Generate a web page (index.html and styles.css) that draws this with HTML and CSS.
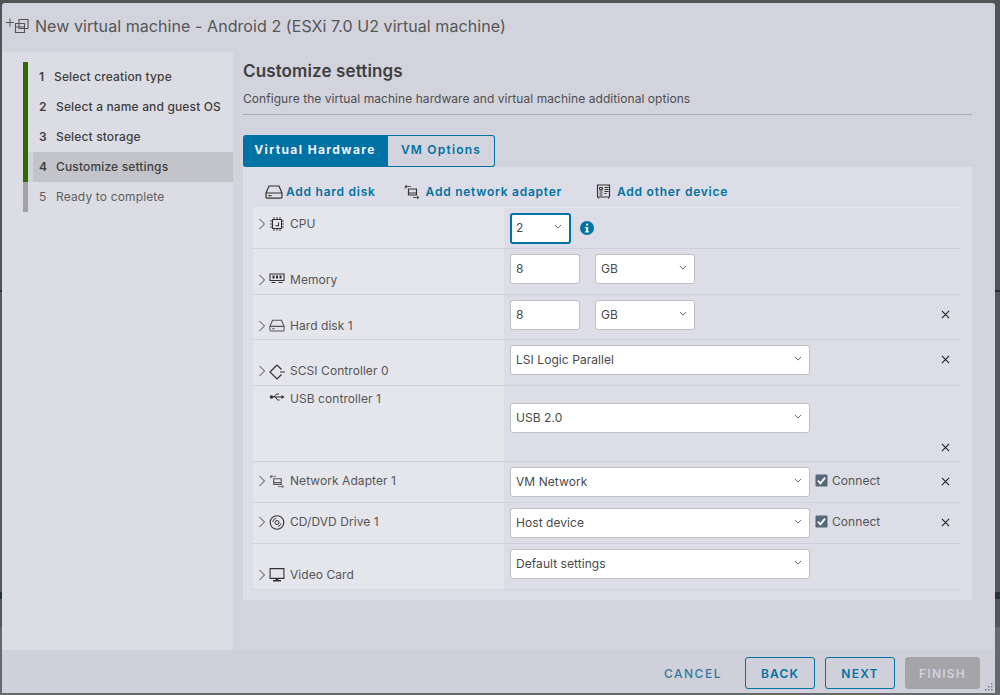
FILE: index.html
```html
<!DOCTYPE html>
<html lang="en">
<head>
  <meta charset="UTF-8" />
  <title>New virtual machine</title>
  <link rel="stylesheet" href="styles.css">
</head>
<body>

<svg class="defs" width="0" height="0">
  <symbol id="i-disk" viewBox="0 0 18 14">
    <path d="M4 1h10l3 7v4a1.2 1.2 0 0 1-1.2 1.2H2.2A1.2 1.2 0 0 1 1 12V8z M1 8h16 M3.5 10.6h3" fill="none" stroke="currentColor" stroke-width="1.2"/>
  </symbol>
  <symbol id="i-net" viewBox="0 0 16 16">
    <path d="M4.5 5h8v6h-8z M4.5 9h8" fill="none" stroke="currentColor" stroke-width="1.2"/>
    <path d="M1 2.5h6 M1 2.5l2-1.5 M1 2.5l2 1.5 M9 13.5h6 M15 13.5l-2-1.5 M15 13.5l-2 1.5 M1 2.5v2" fill="none" stroke="currentColor" stroke-width=".8"/>
  </symbol>
  <symbol id="i-x" viewBox="0 0 10 10">
    <path d="M1 1l8 8 M9 1l-8 8" fill="none" stroke="currentColor" stroke-width="1.2"/>
  </symbol>
  <symbol id="i-arrow" viewBox="0 0 8 12">
    <path d="M1.5 1l5 5-5 5" fill="none" stroke="currentColor" stroke-width="1"/>
  </symbol>
  <symbol id="i-chev" viewBox="0 0 10 6">
    <path d="M1 1l4 4 4-4" fill="none" stroke="currentColor" stroke-width="1"/>
  </symbol>
  <symbol id="i-check" viewBox="0 0 14 14">
    <rect width="13" height="13" x=".5" y=".5" rx="1.5" fill="#56697a"/>
    <path d="M3.2 7.2l2.6 2.8 5-6" fill="none" stroke="#fff" stroke-width="2"/>
  </symbol>
</svg>

<div class="modal">
  <header class="modal-head">
    <svg class="head-icon" viewBox="0 0 28 20" width="28" height="20">
      <path d="M0 6.5h8 M4 2.5v8" fill="none" stroke="#555" stroke-width="1"/>
      <path d="M13 3.5h9v9h-9z M9.5 7.5h9v9h-9z M9.5 11h9 M13 7.5v-4" fill="none" stroke="#555" stroke-width="1.1"/>
    </svg>
    <h1>New virtual machine - Android 2 (ESXi 7.0 U2 virtual machine)</h1>
  </header>

  <div class="modal-body">
    <aside class="sidebar">
      <ol class="steps">
        <li class="step done"><div class="step-in"><b>1</b><span>Select creation type</span></div></li>
        <li class="step done"><div class="step-in"><b class="wide">2</b><span>Select a name and guest OS</span></div></li>
        <li class="step done"><div class="step-in"><b class="wide">3</b><span>Select storage</span></div></li>
        <li class="step done current"><div class="step-in"><b class="wide">4</b><span>Customize settings</span></div></li>
        <li class="step todo"><div class="step-in"><b class="wide">5</b><span>Ready to complete</span></div></li>
      </ol>
    </aside>

    <main class="content">
      <h2>Customize settings</h2>
      <p class="sub">Configure the virtual machine hardware and virtual machine additional options</p>

      <div class="tabs">
        <div class="tab active">Virtual Hardware</div>
        <div class="tab">VM Options</div>
      </div>

      <div class="panel">
        <div class="toolbar">
          <a class="tool t1"><svg width="18" height="14"><use href="#i-disk"/></svg>Add hard disk</a>
          <a class="tool t2"><svg width="16" height="16"><use href="#i-net"/></svg>Add network adapter</a>
          <a class="tool t3">
            <svg width="15" height="15" viewBox="0 0 15 15"><path d="M1.5 1h12v12h-12z" fill="none" stroke="#333" stroke-width="1.2"/><path d="M3.5 3.5h3v2h-3z M3.5 7h3 M3.5 9h3 M3.5 11h3 M8.5 3.5h4 M8.5 5.5h4 M8.5 7.5h4 M8.5 9.5h2 M2.5 13.5v1.2 M12.5 13.5v1.2" fill="none" stroke="#333" stroke-width="1"/></svg>
            Add other device
          </a>
        </div>

        <div class="hw-table">
          <div class="row r-cpu">
            <div class="name">
              <svg class="arrow" width="8" height="12"><use href="#i-arrow"/></svg>
              <svg class="dev" width="14" height="14" viewBox="0 0 14 14"><path d="M2.5 2.5h9v9h-9z M8.5 5.5v3.2h-3" fill="none" stroke="#333" stroke-width="1.1"/><path d="M4 0v2 M7 0v2 M10 0v2 M4 12v2 M7 12v2 M10 12v2 M0 4h2 M0 7h2 M0 10h2 M12 4h2 M12 7h2 M12 10h2" fill="none" stroke="#333" stroke-width=".9"/></svg>
              <span>CPU</span>
            </div>
            <div class="fields">
              <div class="sel sel-cpu">2<svg width="8" height="5"><use href="#i-chev"/></svg></div>
              <svg class="info" width="14" height="14" viewBox="0 0 14 14"><circle cx="7" cy="7" r="7" fill="#0072a3"/><rect x="6" y="2.5" width="2.2" height="2.2" rx="1" fill="#e8eef2"/><path d="M5 6h3.2v4.2h1V11.4H5v-1.2h1V7.2H5z" fill="#e8eef2"/></svg>
            </div>
          </div>

          <div class="row r-mem">
            <div class="name">
              <svg class="arrow" width="8" height="12"><use href="#i-arrow"/></svg>
              <svg class="dev" width="15" height="10" viewBox="0 0 15 10"><path d="M.5 1h14v6.5h-14z" fill="none" stroke="#333" stroke-width="1.1"/><path d="M3 2.5h2v3H3z M6.5 2.5h2v3h-2z M10 2.5h2v3h-2z" fill="#333"/><path d="M2 9.5h4 M9 9.5h4" stroke="#333" stroke-width="1"/></svg>
              <span>Memory</span>
            </div>
            <div class="fields">
              <div class="inp">8</div>
              <div class="sel sel-unit">GB<svg width="8" height="5"><use href="#i-chev"/></svg></div>
            </div>
          </div>

          <div class="row r-disk">
            <div class="name">
              <svg class="arrow" width="8" height="12"><use href="#i-arrow"/></svg>
              <svg class="dev" width="17" height="13"><use href="#i-disk"/></svg>
              <span>Hard disk 1</span>
            </div>
            <div class="fields">
              <div class="inp">8</div>
              <div class="sel sel-unit">GB<svg width="8" height="5"><use href="#i-chev"/></svg></div>
              <svg class="del" width="9" height="9"><use href="#i-x"/></svg>
            </div>
          </div>

          <div class="row r-scsi">
            <div class="name">
              <svg class="arrow" width="8" height="12"><use href="#i-arrow"/></svg>
              <svg class="dev" width="16" height="16" viewBox="0 0 16 16"><path d="M8 1L1 8l7 7 4.5-4.5 M12.5 5.5L8 1 M11 8h5" fill="none" stroke="#333" stroke-width="1.2"/></svg>
              <span>SCSI Controller 0</span>
            </div>
            <div class="fields">
              <div class="sel sel-wide">LSI Logic Parallel<svg width="8" height="5"><use href="#i-chev"/></svg></div>
              <svg class="del" width="9" height="9"><use href="#i-x"/></svg>
            </div>
          </div>

          <div class="row r-usb">
            <div class="name no-arrow">
              <svg class="dev" width="15" height="10" viewBox="0 0 15 10"><path d="M1 5h13" stroke="#333" stroke-width="1.1"/><circle cx="2" cy="5" r="1.8" fill="#333"/><path d="M15 5l-3-2v4z" fill="#333"/><path d="M4.5 5l2.5-3h2.5 M6 5l2 3h2" fill="none" stroke="#333" stroke-width="1"/></svg>
              <span>USB controller 1</span>
            </div>
            <div class="fields fields-usb">
              <div class="sel sel-wide">USB 2.0<svg width="8" height="5"><use href="#i-chev"/></svg></div>
              <svg class="del" width="9" height="9"><use href="#i-x"/></svg>
            </div>
          </div>

          <div class="row r-net">
            <div class="name">
              <svg class="arrow" width="8" height="12"><use href="#i-arrow"/></svg>
              <svg class="dev" width="15" height="15"><use href="#i-net"/></svg>
              <span>Network Adapter 1</span>
            </div>
            <div class="fields">
              <div class="sel sel-wide">VM Network<svg width="8" height="5"><use href="#i-chev"/></svg></div>
              <label class="conn"><svg width="13" height="13"><use href="#i-check"/></svg>Connect</label>
              <svg class="del" width="9" height="9"><use href="#i-x"/></svg>
            </div>
          </div>

          <div class="row r-cd">
            <div class="name">
              <svg class="arrow" width="8" height="12"><use href="#i-arrow"/></svg>
              <svg class="dev" width="15" height="15" viewBox="0 0 15 15"><circle cx="7.5" cy="7.5" r="6.8" fill="none" stroke="#333" stroke-width="1.1"/><circle cx="7.5" cy="7.5" r="2" fill="none" stroke="#333" stroke-width="1"/><path d="M3.2 7a4.4 4.4 0 0 1 3.5-3.8 M11.5 8.5a4.4 4.4 0 0 1-3 3" fill="none" stroke="#333" stroke-width=".9"/></svg>
              <span>CD/DVD Drive 1</span>
            </div>
            <div class="fields">
              <div class="sel sel-wide">Host device<svg width="8" height="5"><use href="#i-chev"/></svg></div>
              <label class="conn"><svg width="13" height="13"><use href="#i-check"/></svg>Connect</label>
              <svg class="del" width="9" height="9"><use href="#i-x"/></svg>
            </div>
          </div>

          <div class="row r-video">
            <div class="name">
              <svg class="arrow" width="8" height="12"><use href="#i-arrow"/></svg>
              <svg class="dev" width="15" height="14" viewBox="0 0 15 14"><path d="M.6.6h13.8v9.8H.6z" fill="none" stroke="#333" stroke-width="1.1"/><path d="M6 10.5h3v1.5H6z M3.5 12h8v1.5h-8z" fill="#333"/></svg>
              <span>Video Card</span>
            </div>
            <div class="fields">
              <div class="sel sel-wide">Default settings<svg width="8" height="5"><use href="#i-chev"/></svg></div>
            </div>
          </div>
        </div>
      </div>
    </main>
  </div>

  <footer class="modal-foot">
    <button class="btn link">CANCEL</button>
    <button class="btn outline">BACK</button>
    <button class="btn outline">NEXT</button>
    <button class="btn disabled">FINISH</button>
    <svg class="grip" width="8" height="8" viewBox="0 0 8 8"><path d="M6 0h1.5v1.5H6z M3 3h1.5v1.5H3z M6 3h1.5v1.5H6z M0 6h1.5v1.5H0z M3 6h1.5v1.5H3z M6 6h1.5v1.5H6z" fill="#77787e"/></svg>
  </footer>
</div>

</body>
</html>
```

FILE: styles.css
```css
* {
  box-sizing: border-box;
}

body {
  margin: 0;
  width: 1000px;
  height: 695px;
  padding: 3px 5px 2px 2px;
  /* what shows of the page behind the dialog */
  background: linear-gradient(to bottom, #525357 0, #525357 290px, #2b2f33 290px, #2b2f33 292px, #56575b 292px, #56575b 592px, #26333d 592px, #26333d 599px, #55565a 599px, #55565a 627px, #67686c 627px);
  font-family: Inter, 'Noto Sans', sans-serif;
  font-size: 12px;
  letter-spacing: .06px;
  color: #565656;
  overflow: hidden;
}

.defs {
  display: block;
  height: 0;
}

.modal {
  height: 690px;
  display: flex;
  flex-direction: column;
  background: #d2d3dd;
  border-radius: 3px;
}

.modal-head {
  height: 49px;
  display: flex;
  align-items: center;
  gap: 1px;
  padding: 0 0 0 4px;
}

.modal-head h1 {
  margin: -3px 0 0;
  font-size: 16px;
  font-weight: 400;
  color: #565656;
  letter-spacing: .07px;
}

.head-icon {
  margin-top: -3px;
}

.modal-body {
  flex: 1;
  display: flex;
}

.sidebar {
  width: 231px;
  background: #dbdce4;
  padding: 10px 0 0 21px;
}

.steps {
  list-style: none;
  margin: 0;
  padding: 0;
}

.step {
  height: 30px;
  border-left: 5px solid #2f6b00;
  font-weight: 500;
  letter-spacing: .15px;
  color: #3f3f3f;
}

.step-in {
  height: 30px;
  display: flex;
  align-items: center;
  padding: 0 0 2px 11px;
}

.step b {
  font-weight: 600;
  width: 15px;
}

.step b.wide {
  width: 17px;
}

.step.current {
  background: #d2d3dd;
}

.step.current .step-in {
  margin-left: 5px;
  padding-left: 6px;
  background: #c3c4ca;
  border-radius: 3px 0 0 3px;
}

.step.todo {
  border-left-color: #a3a3a7;
  font-weight: 400;
  color: #5f5f5f;
}

.step.todo b {
  font-weight: 400;
}

.content {
  flex: 1;
  padding: 9px 23px 0 10px;
}

.content h2 {
  margin: 0;
  font-size: 17px;
  line-height: 21px;
  font-weight: 600;
  letter-spacing: .12px;
  color: #3f3f3f;
}

.sub {
  margin: 9px 0 0;
  padding-bottom: 7px;
  line-height: 16px;
  border-bottom: 1px solid #a9aab3;
  color: #4f4f4f;
}

.tabs {
  display: flex;
  margin-top: 20px;
  height: 32px;
}

.tab {
  display: flex;
  align-items: center;
  justify-content: center;
  width: 107px;
  padding-bottom: 3px;
  font-weight: 600;
  letter-spacing: 1.2px;
  color: #0072a3;
  border: 1px solid #0072a3;
  border-left: 0;
  border-radius: 0 3px 3px 0;
}

.tab.active {
  width: 145px;
  background: #0072a3;
  color: #f2f3f5;
  font-weight: 700;
  letter-spacing: 1.4px;
  border-radius: 3px 0 0 3px;
}

.panel {
  height: 433px;
  background: #dcdde6;
  padding: 1px 11px 0 10px;
}

.toolbar {
  height: 40px;
  display: flex;
  align-items: center;
  padding: 7px 0 0 12px;
}

.tool {
  display: flex;
  align-items: center;
  gap: 3px;
  font-weight: 600;
  letter-spacing: .75px;
  color: #0072a3;
}

.tool svg {
  color: #333;
}

.t2 {
  margin-left: 28px;
  gap: 6px;
}

.t3 {
  margin-left: 34px;
  gap: 6px;
}

.hw-table {
  margin-top: -1px;
  border-top: 1px solid #e5e5ec;
}

.row {
  display: grid;
  grid-template-columns: 251px 1fr;
  border-bottom: 1px solid #cfd0d9;
}

.row:last-child {
  border-bottom-color: #d4d5de;
}

.r-cpu { height: 41px; }
.r-mem { height: 46px; }
.r-disk { height: 45px; }
.r-scsi { height: 46px; }
.r-usb { height: 76px; }
.r-net { height: 41px; }
.r-cd { height: 41px; }
.r-video { height: 46px; }

.name {
  display: flex;
  align-items: flex-start;
  background: #e5e5ec;
  padding: 23px 0 0 5px;
  color: #565656;
  line-height: 16px;
}

.r-cpu .name { padding-top: 8px; }
.r-usb .name { padding-top: 5px; }
.r-net .name, .r-cd .name { padding-top: 11px; }

.name .arrow {
  margin: 2px 3px 0 0;
  color: #444;
  flex: none;
}

.name .dev {
  width: 16px;
  margin: 1px 5px 0 0;
  flex: none;
}

.no-arrow {
  padding-left: 16px;
}

.fields {
  position: relative;
  display: flex;
  align-items: flex-start;
  padding: 5px 0 0 6px;
  color: #4f4f4f;
}

.inp, .sel {
  height: 30px;
  padding: 0 6px 2px 5px;
  display: flex;
  align-items: center;
  justify-content: space-between;
  background: #fff;
  border: 1px solid #bfbfc4;
  border-radius: 3px;
  color: #4a4a4a;
}

.sel svg {
  margin: -2px 1px 0 0;
  color: #444;
}

.inp {
  width: 70px;
}

.sel-unit {
  width: 100px;
  margin-left: 15px;
}

.sel-wide {
  width: 300px;
}

.sel-cpu {
  width: 61px;
  height: 31px;
  border: 2px solid #0072a3;
  padding-left: 4px;
}

.r-cpu .fields {
  align-items: center;
  padding-top: 0;
}

.info {
  margin-left: 9px;
}

.fields-usb {
  padding-top: 17px;
}

.conn {
  display: flex;
  align-items: center;
  gap: 4px;
  margin: 6px 0 0 5px;
  color: #565656;
}

/* delete cross sits over the right end of the row */
.del {
  position: absolute;
  left: 437px;
  top: 15px;
  color: #222;
}

.r-usb .del { top: 57px; }

.modal-foot {
  position: relative;
  height: 43px;
  flex: none;
  display: flex;
  align-items: flex-start;
  justify-content: flex-end;
  padding: 7px 15px 0 0;
  background: #cfd0d9;
}

.grip {
  position: absolute;
  right: 2px;
  bottom: 2px;
}

.btn {
  height: 32px;
  width: 70px;
  font-family: inherit;
  font-size: 12px;
  font-weight: 600;
  letter-spacing: 1.2px;
  border-radius: 3px;
  margin-left: 10px;
  background: none;
  color: #0072a3;
  border: 1px solid #0072a3;
}

.btn.link {
  border: 0;
  width: 66px;
  font-weight: 500;
  letter-spacing: 1.5px;
  color: #33799e;
  margin-right: 11px;
}

.btn.disabled {
  width: 75px;
  background: #a4a4a9;
  border-color: #a4a4a9;
  color: #d2d3d8;
}
```
